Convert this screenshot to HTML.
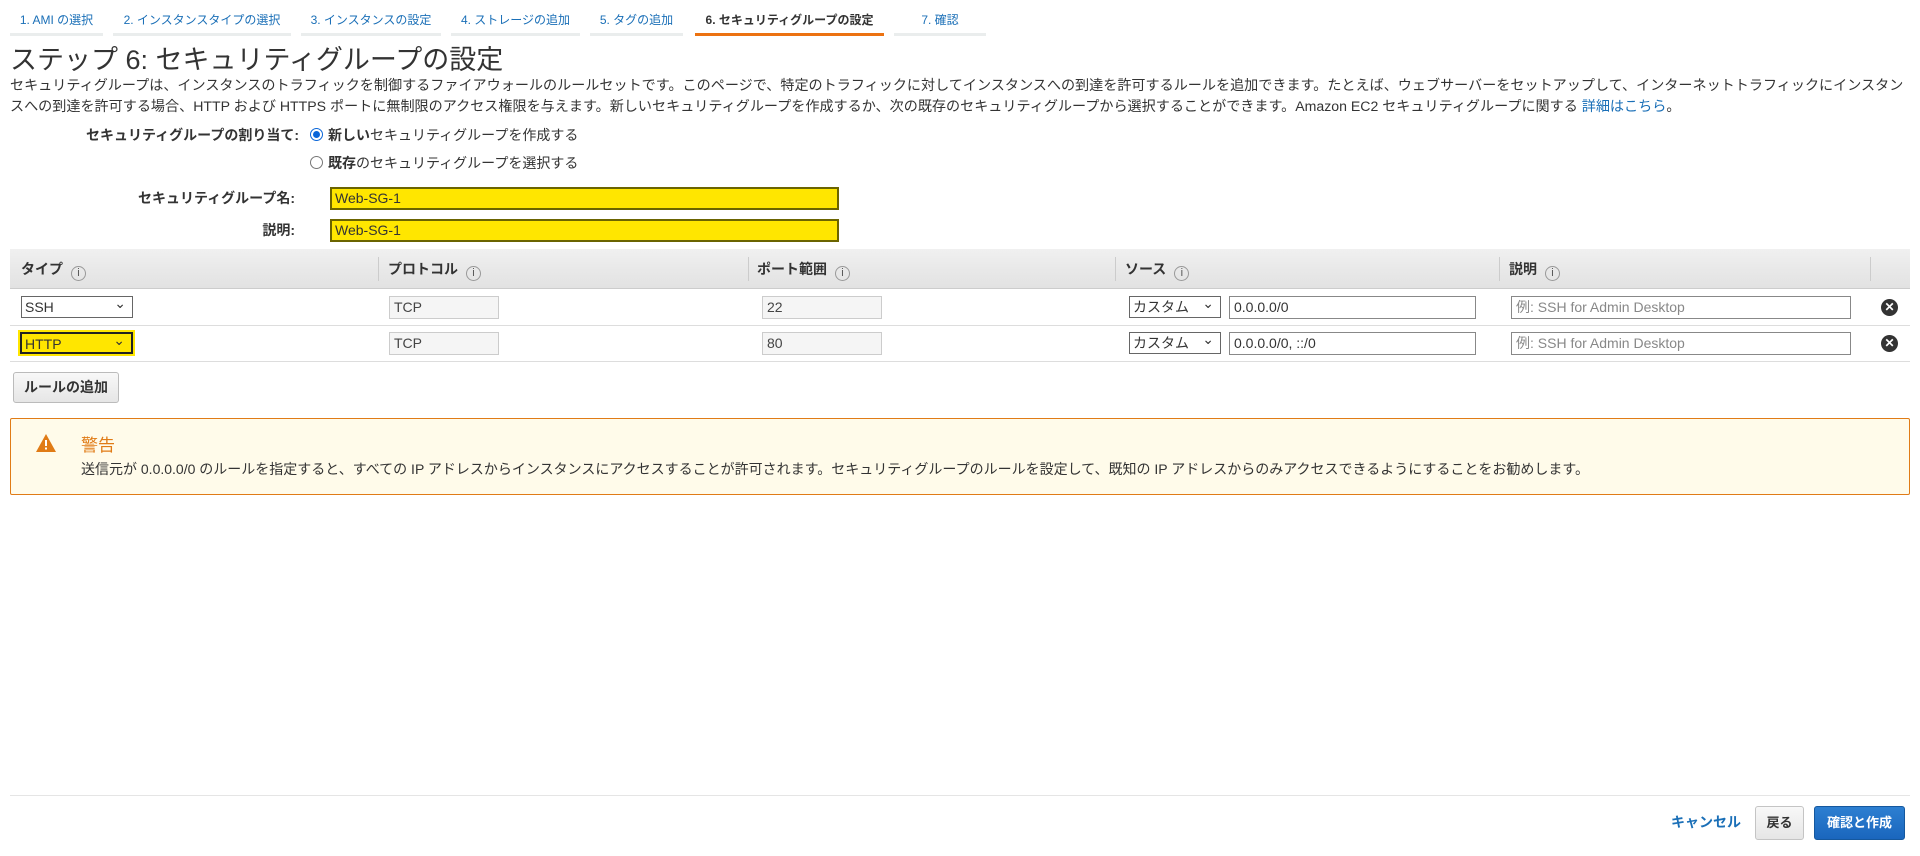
<!DOCTYPE html>
<html><head><meta charset="utf-8"><style>
*{box-sizing:border-box;margin:0;padding:0}
body{width:1920px;height:856px;background:#fff;font-family:"Liberation Sans","Noto Sans CJK JP",sans-serif;color:#333;position:relative;overflow:hidden;font-size:14px}
.a{position:absolute;white-space:nowrap}
.tab{position:absolute;top:0;height:36px;border-bottom:3px solid #eaeded;color:#1a6fb7;font-size:12px;line-height:40px;text-align:center}
.tab.on{border-bottom-color:#ec7211;color:#333;font-weight:bold}
.lbl{position:absolute;font-weight:bold;text-align:right;font-size:14px;line-height:20px}
.yin{position:absolute;left:330px;width:509px;height:23px;background:#ffe600;border:2px solid #6b6400;font-size:14px;line-height:19px;padding-left:3px;color:#333}
.th{position:absolute;top:249px;height:40px;font-weight:bold;font-size:14px;line-height:40px}
.sep{position:absolute;top:257px;width:1px;height:24px;background:#ccc}
.i{display:inline-block;width:15px;height:15px;border:1px solid #999;border-radius:50%;font-size:11px;line-height:13px;text-align:center;font-weight:normal;color:#555;margin-left:8px;vertical-align:-2px}
.ro{position:absolute;height:23px;background:#f5f5f5;border:1px solid #ccc;font-size:14px;line-height:21px;padding-left:4px;color:#444}
.in{position:absolute;height:23px;background:#fff;border:1px solid #888;font-size:14px;line-height:21px;padding-left:4px;color:#333}
.sel{position:absolute;height:22px;background:#fff;border:1px solid #666;font-size:14px;line-height:20px;padding-left:3px}
.sel:after{content:"⌄";position:absolute;right:6px;top:-4px;font-size:14px}
.x{position:absolute;width:17px;height:17px;border-radius:50%;background:#333;color:#fff;font-size:12px;font-weight:bold;line-height:17px;text-align:center}
.hl{position:absolute;left:10px;width:1900px;height:1px;background:#ddd}
.r{line-height:20px}
</style></head><body>
<div class="tab" style="left:10px;width:93px">1. AMI の選択</div>
<div class="tab" style="left:113px;width:178px">2. インスタンスタイプの選択</div>
<div class="tab" style="left:301px;width:140px">3. インスタンスの設定</div>
<div class="tab" style="left:451px;width:129px">4. ストレージの追加</div>
<div class="tab" style="left:590px;width:93px">5. タグの追加</div>
<div class="tab on" style="left:695px;width:189px">6. セキュリティグループの設定</div>
<div class="tab" style="left:894px;width:92px">7. 確認</div>

<div class="a" style="left:10px;top:44px;font-size:27px;line-height:32px;color:#333">ステップ 6: セキュリティグループの設定</div>
<div class="a" style="left:10px;top:75px;font-size:14.1px;line-height:21px;color:#333">セキュリティグループは、インスタンスのトラフィックを制御するファイアウォールのルールセットです。このページで、特定のトラフィックに対してインスタンスへの到達を許可するルールを追加できます。たとえば、ウェブサーバーをセットアップして、インターネットトラフィックにインスタン<br>スへの到達を許可する場合、HTTP および HTTPS ポートに無制限のアクセス権限を与えます。新しいセキュリティグループを作成するか、次の既存のセキュリティグループから選択することができます。Amazon EC2 セキュリティグループに関する <span style="color:#1a6fb7">詳細はこちら</span>。</div>

<div class="lbl" style="right:1621px;top:125px">セキュリティグループの割り当て:</div>
<div class="a" style="left:310px;top:128px;width:13px;height:13px;border-radius:50%;border:1px solid #0a66d9;background:#fff"><div style="margin:2px;width:7px;height:7px;border-radius:50%;background:#0a66d9"></div></div>
<div class="a r" style="left:328px;top:125px"><b>新しい</b>セキュリティグループを作成する</div>
<div class="a" style="left:310px;top:156px;width:13px;height:13px;border-radius:50%;border:1px solid #777;background:#fff"></div>
<div class="a r" style="left:328px;top:153px"><b>既存</b>のセキュリティグループを選択する</div>

<div class="lbl" style="right:1625px;top:188px">セキュリティグループ名:</div>
<div class="yin" style="top:187px">Web-SG-1</div>
<div class="lbl" style="right:1625px;top:220px">説明:</div>
<div class="yin" style="top:219px">Web-SG-1</div>

<div class="a" style="left:10px;top:249px;width:1900px;height:40px;background:linear-gradient(#f0f0f0,#e2e2e2);border-bottom:1px solid #ccc"></div>
<div class="th" style="left:21px">タイプ<span class="i">i</span></div>
<div class="sep" style="left:378px"></div>
<div class="th" style="left:388px">プロトコル<span class="i">i</span></div>
<div class="sep" style="left:748px"></div>
<div class="th" style="left:757px">ポート範囲<span class="i">i</span></div>
<div class="sep" style="left:1115px"></div>
<div class="th" style="left:1125px">ソース<span class="i">i</span></div>
<div class="sep" style="left:1499px"></div>
<div class="th" style="left:1509px">説明<span class="i">i</span></div>
<div class="sep" style="left:1870px"></div>

<div class="sel" style="left:21px;top:296px;width:112px">SSH</div>
<div class="ro" style="left:389px;top:296px;width:110px">TCP</div>
<div class="ro" style="left:762px;top:296px;width:120px">22</div>
<div class="sel" style="left:1129px;top:296px;width:92px">カスタム</div>
<div class="in" style="left:1229px;top:296px;width:247px">0.0.0.0/0</div>
<div class="in" style="left:1511px;top:296px;width:340px;color:#888">例: SSH for Admin Desktop</div>
<div class="x" style="left:1881px;top:299px">✕</div>
<div class="hl" style="top:325px"></div>

<div class="sel" style="left:20px;top:332px;width:113px;background:#ffe600;border:2px solid #222;box-shadow:0 0 0 2px #ffe600">HTTP</div>
<div class="ro" style="left:389px;top:332px;width:110px">TCP</div>
<div class="ro" style="left:762px;top:332px;width:120px">80</div>
<div class="sel" style="left:1129px;top:332px;width:92px">カスタム</div>
<div class="in" style="left:1229px;top:332px;width:247px">0.0.0.0/0, ::/0</div>
<div class="in" style="left:1511px;top:332px;width:340px;color:#888">例: SSH for Admin Desktop</div>
<div class="x" style="left:1881px;top:335px">✕</div>
<div class="hl" style="top:361px"></div>

<div class="a" style="left:13px;top:372px;width:106px;height:31px;border:1px solid #bbb;border-radius:3px;background:linear-gradient(#f8f8f8,#e6e6e6);font-weight:bold;line-height:29px;text-align:center">ルールの追加</div>

<div class="a" style="left:10px;top:418px;width:1900px;height:77px;background:#fffbea;border:1px solid #e07b16;border-radius:2px"></div>
<svg class="a" style="left:36px;top:434px" width="20" height="18" viewBox="0 0 20 18"><path d="M10 0L20 18H0Z" fill="#e07b16"/><rect x="9" y="6" width="2" height="6" fill="#fff"/><rect x="9" y="13.5" width="2" height="2" fill="#fff"/></svg>
<div class="a" style="left:81px;top:435px;font-size:17px;line-height:22px;color:#e07b16">警告</div>
<div class="a" style="left:81px;top:459px;font-size:14px;line-height:20px">送信元が 0.0.0.0/0 のルールを指定すると、すべての IP アドレスからインスタンスにアクセスすることが許可されます。セキュリティグループのルールを設定して、既知の IP アドレスからのみアクセスできるようにすることをお勧めします。</div>

<div class="hl" style="top:795px;background:#e5e5e5"></div>
<div class="a" style="left:1671px;top:812px;font-size:14px;color:#1a6fb7;font-weight:bold">キャンセル</div>
<div class="a" style="left:1755px;top:806px;width:49px;height:34px;border:1px solid #c4c4c4;border-radius:3px;background:linear-gradient(#f8f8f8,#e6e6e6);text-align:center;line-height:32px;font-weight:bold;font-size:13px">戻る</div>
<div class="a" style="left:1814px;top:806px;width:91px;height:34px;border:1px solid #15589e;border-radius:3px;background:linear-gradient(#2d7fd1,#1a66bd);text-align:center;line-height:32px;font-weight:bold;font-size:13px;color:#fff">確認と作成</div>
</body></html>
